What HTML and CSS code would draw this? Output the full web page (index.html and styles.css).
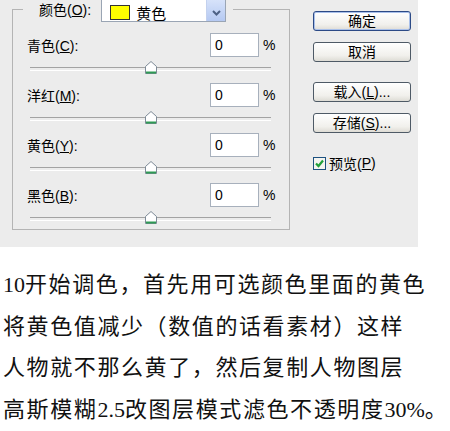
FILE: index.html
```html
<!DOCTYPE html>
<html lang="zh-CN">
<head>
  <meta charset="UTF-8" />
  <meta name="viewport" content="width=device-width, initial-scale=1.0" />
  <title>可选颜色</title>
  <link rel="stylesheet" href="styles.css">
</head>
<body>
  <div class="dialog">
    <fieldset class="group">
      <legend class="group-title">
        <span class="label">颜色(<u>O</u>):</span>
        <span class="select">
          <span class="swatch"></span>
          <span class="select-text">黄色</span>
          <span class="select-arrow">
            <svg width="9" height="6" viewBox="0 0 9 6"><path d="M1 1 L4.5 4.5 L8 1" fill="none" stroke="#4d6185" stroke-width="2"/></svg>
          </span>
        </span>
      </legend>

      <div class="row">
        <div class="row-top">
          <span class="label">青色(<u>C</u>):</span>
          <span class="field"><span class="input">0</span><span class="unit">%</span></span>
        </div>
        <div class="slider"><span class="thumb"><svg width="12" height="13" viewBox="0 0 12 13"><path d="M6 0.5 L11.5 5.5 L11.5 12.5 L0.5 12.5 L0.5 5.5 Z" fill="#fff" stroke="#7d8a96"/><path d="M1 11.5 H11" stroke="#2f9a55" stroke-width="2"/></svg></span></div>
      </div>

      <div class="row">
        <div class="row-top">
          <span class="label">洋红(<u>M</u>):</span>
          <span class="field"><span class="input">0</span><span class="unit">%</span></span>
        </div>
        <div class="slider"><span class="thumb"><svg width="12" height="13" viewBox="0 0 12 13"><path d="M6 0.5 L11.5 5.5 L11.5 12.5 L0.5 12.5 L0.5 5.5 Z" fill="#fff" stroke="#7d8a96"/><path d="M1 11.5 H11" stroke="#2f9a55" stroke-width="2"/></svg></span></div>
      </div>

      <div class="row">
        <div class="row-top">
          <span class="label">黄色(<u>Y</u>):</span>
          <span class="field"><span class="input">0</span><span class="unit">%</span></span>
        </div>
        <div class="slider"><span class="thumb"><svg width="12" height="13" viewBox="0 0 12 13"><path d="M6 0.5 L11.5 5.5 L11.5 12.5 L0.5 12.5 L0.5 5.5 Z" fill="#fff" stroke="#7d8a96"/><path d="M1 11.5 H11" stroke="#2f9a55" stroke-width="2"/></svg></span></div>
      </div>

      <div class="row">
        <div class="row-top">
          <span class="label">黑色(<u>B</u>):</span>
          <span class="field"><span class="input">0</span><span class="unit">%</span></span>
        </div>
        <div class="slider"><span class="thumb"><svg width="12" height="13" viewBox="0 0 12 13"><path d="M6 0.5 L11.5 5.5 L11.5 12.5 L0.5 12.5 L0.5 5.5 Z" fill="#fff" stroke="#7d8a96"/><path d="M1 11.5 H11" stroke="#2f9a55" stroke-width="2"/></svg></span></div>
      </div>
    </fieldset>

    <div class="actions">
      <button class="btn btn-default">确定</button>
      <button class="btn">取消</button>
      <button class="btn btn-far">载入(<u>L</u>)...</button>
      <button class="btn">存储(<u>S</u>)...</button>
      <label class="check">
        <span class="box"><svg width="11" height="11" viewBox="0 0 11 11"><path d="M2 5.5 L4.5 8 L9 2.5" fill="none" stroke="#22a03a" stroke-width="2.2"/></svg></span>
        预览(<u>P</u>)
      </label>
    </div>
  </div>

  <div class="note">
    <p><span class="num">10</span>开始调色，首先用可选颜色里面的黄色</p>
    <p>将黄色值减少（数值的话看素材）这样</p>
    <p>人物就不那么黄了，然后复制人物图层</p>
    <p>高斯模糊<span class="num">2.5</span>改图层模式滤色不透明度<span class="num">30%</span>。</p>
  </div>
</body>
</html>
```

FILE: styles.css
```css
* { box-sizing: border-box; }
body {
  margin: 0;
  background: #fff;
  font-family: "Liberation Sans", "Noto Sans CJK SC", sans-serif;
  color: #000;
}
u { text-decoration: underline; }

/* dialog */
.dialog {
  display: flex;
  width: 418px;
  height: 247px;
  background: #ececec;
  font-size: 14px;
}
.group {
  margin: -4px 0 0 12px;
  width: 278px;
  padding: 11px 10px 2px 10px;
  border: 1px solid #b4b4b4;
  display: flex;
  flex-direction: column;
  gap: 6px;
  align-self: flex-start;
}
.group-title {
  display: flex;
  align-items: center;
  padding: 0 7px 0 16px;
}
.group-title .label {
  margin-right: 10px;
}
.select {
  display: flex;
  align-items: center;
  width: 125px;
  height: 26px;
  background: #fff;
  border: 1px solid #9aa5b4;
  padding-left: 8px;
}
.swatch {
  width: 20px;
  height: 15px;
  background: #ffff00;
  border: 1px solid #333;
  margin-top: 6px;
}
.select-text {
  margin-left: 6px;
  margin-top: 6px;
  font-size: 15px;
}
.select-arrow {
  margin-left: auto;
  width: 19px;
  height: 24px;
  display: flex;
  align-items: center;
  justify-content: center;
  padding-top: 8px;
  background: linear-gradient(#dbe6fb, #b5c9f2);
  border-left: 1px solid #c3d1ee;
}

.row {
  height: 44px;
  display: flex;
  flex-direction: column;
}
.row-top {
  height: 24px;
  display: flex;
  align-items: center;
  justify-content: space-between;
  padding-left: 4px;
}
.field {
  display: flex;
  align-items: center;
}
.input {
  width: 49px;
  height: 24px;
  background: #fff;
  border: 1px solid #a7b0bc;
  padding: 3px 0 0 4px;
  font-size: 14px;
}
.unit {
  margin-left: 4px;
  width: 16px;
}
.slider {
  position: relative;
  height: 20px;
  margin: 0 8px 0 7px;
}
.slider::before {
  content: "";
  display: block;
  margin-top: 10px;
  height: 2px;
  border-top: 1px solid #a3a3a3;
  border-bottom: 1px solid #fff;
}
.thumb {
  position: absolute;
  left: 50%;
  top: 4px;
  transform: translateX(-50%);
  line-height: 0;
}

.actions {
  margin-left: 23px;
  width: 98px;
  padding-top: 11px;
  display: flex;
  flex-direction: column;
  gap: 11px;
}
.btn {
  height: 20px;
  padding: 0;
  font-family: "Liberation Sans", "Noto Sans CJK SC", sans-serif;
  font-size: 14px;
  line-height: 18px;
  color: #000;
  border: 1px solid #4e5a66;
  border-radius: 3px;
  background: linear-gradient(#ffffff, #f1f0ec 70%, #dedcd5);
}
.btn-default {
  border-color: #2c4a86;
  box-shadow: inset 0 0 0 1px #a9c0ea;
}
.btn-far {
  margin-top: 9px;
}
.check {
  margin-top: 9px;
  display: flex;
  align-items: center;
  font-size: 14px;
}
.box {
  width: 13px;
  height: 13px;
  border: 1px solid #1c5180;
  background: #f4f4f0;
  margin-right: 3px;
  display: flex;
  align-items: center;
  justify-content: center;
}

/* note text */
.note {
  padding: 17px 0 0 3px;
  font-family: "Liberation Serif", "Noto Sans CJK SC", serif;
  font-size: 22px;
  line-height: 41.7px;
  letter-spacing: 1.6px;
  color: #111;
}
.note p {
  margin: 0;
  white-space: nowrap;
}
.num {
  letter-spacing: 0;
}
```
